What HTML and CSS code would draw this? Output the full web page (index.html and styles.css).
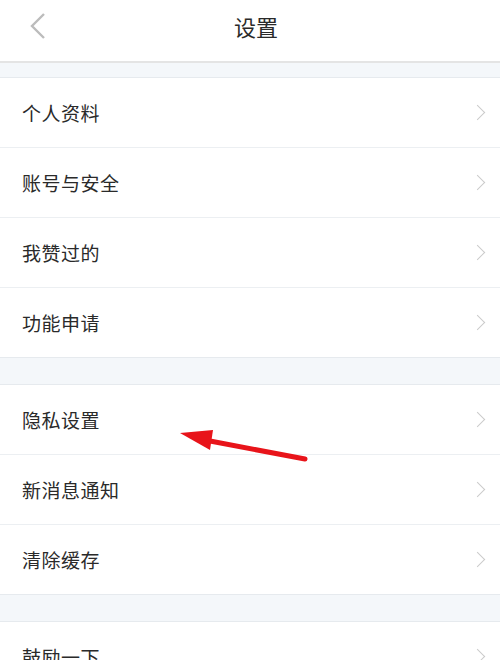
FILE: index.html
```html
<!DOCTYPE html>
<html lang="zh-CN">
<head>
    <meta charset="UTF-8">
    <meta name="viewport" content="width=device-width, initial-scale=1.0">
    <title>设置</title>
    <link rel="stylesheet" href="styles.css">
</head>
<body>
    <div class="page">
        <div class="header">
            <a class="back">
                <svg width="20" height="28" viewBox="0 0 20 28"><path d="M16 2 L4 14 L16 26" fill="none" stroke="#bcbcbc" stroke-width="2.4"/></svg>
            </a>
            <div class="title">设置</div>
        </div>

        <div class="gap first"></div>
        <div class="group">
            <div class="row"><span>个人资料</span><i class="more"></i></div>
            <div class="row"><span>账号与安全</span><i class="more"></i></div>
            <div class="row"><span>我赞过的</span><i class="more"></i></div>
            <div class="row"><span>功能申请</span><i class="more"></i></div>
        </div>

        <div class="gap"></div>
        <div class="group">
            <div class="row"><span>隐私设置</span><i class="more"></i></div>
            <div class="row"><span>新消息通知</span><i class="more"></i></div>
            <div class="row"><span>清除缓存</span><i class="more"></i></div>
        </div>

        <div class="gap"></div>
        <div class="group">
            <div class="row"><span>鼓励一下</span><i class="more"></i></div>
        </div>

        <!-- 标注箭头 -->
        <svg class="mark" width="140" height="40" viewBox="0 0 140 40">
            <line x1="30" y1="11" x2="125" y2="29" stroke="#e8141a" stroke-width="5" stroke-linecap="round"/>
            <polygon points="0,3 33,0 30,20" fill="#e8141a"/>
        </svg>
    </div>
</body>
</html>
```
FILE: styles.css
```css
*{
    margin: 0;
    padding: 0;
}
body{
    font-family: "Noto Sans CJK SC", "Noto Sans", sans-serif;
    color: #2a2a2a;
    background: #f4f7fa;
}
.page{
    width: 500px;
    height: 660px;
    overflow: hidden;
    position: relative;
}
.header{
    height: 61px;
    background: #fff;
    border-bottom: 2px solid #e4e4e4;
    display: flex;
    align-items: center;
    justify-content: center;
    position: relative;
}
.back{
    position: absolute;
    left: 28px;
    top: 12px;
}
.title{
    font-size: 22px;
    color: #2a2a2a;
    margin-top: -10px;
    margin-left: 12px;
}
.gap{
    height: 26px;
    background: #f4f7fa;
}
.gap.first{
    height: 14px;
}
.group{
    background: #fff;
    border-top: 1px solid #e6eaee;
    border-bottom: 1px solid #e6eaee;
}
.row{
    height: 69px;
    padding: 0 12px 0 22px;
    display: flex;
    align-items: center;
    justify-content: space-between;
    font-size: 19px;
    letter-spacing: 0.5px;
}
.row + .row{
    border-top: 1px solid #eceff2;
}
.more{
    width: 10px;
    height: 10px;
    border-top: 1.8px solid #cacaca;
    border-right: 1.8px solid #cacaca;
    transform: rotate(45deg);
    margin-right: 5px;
}
.mark{
    position: absolute;
    left: 180px;
    top: 430px;
}
```
